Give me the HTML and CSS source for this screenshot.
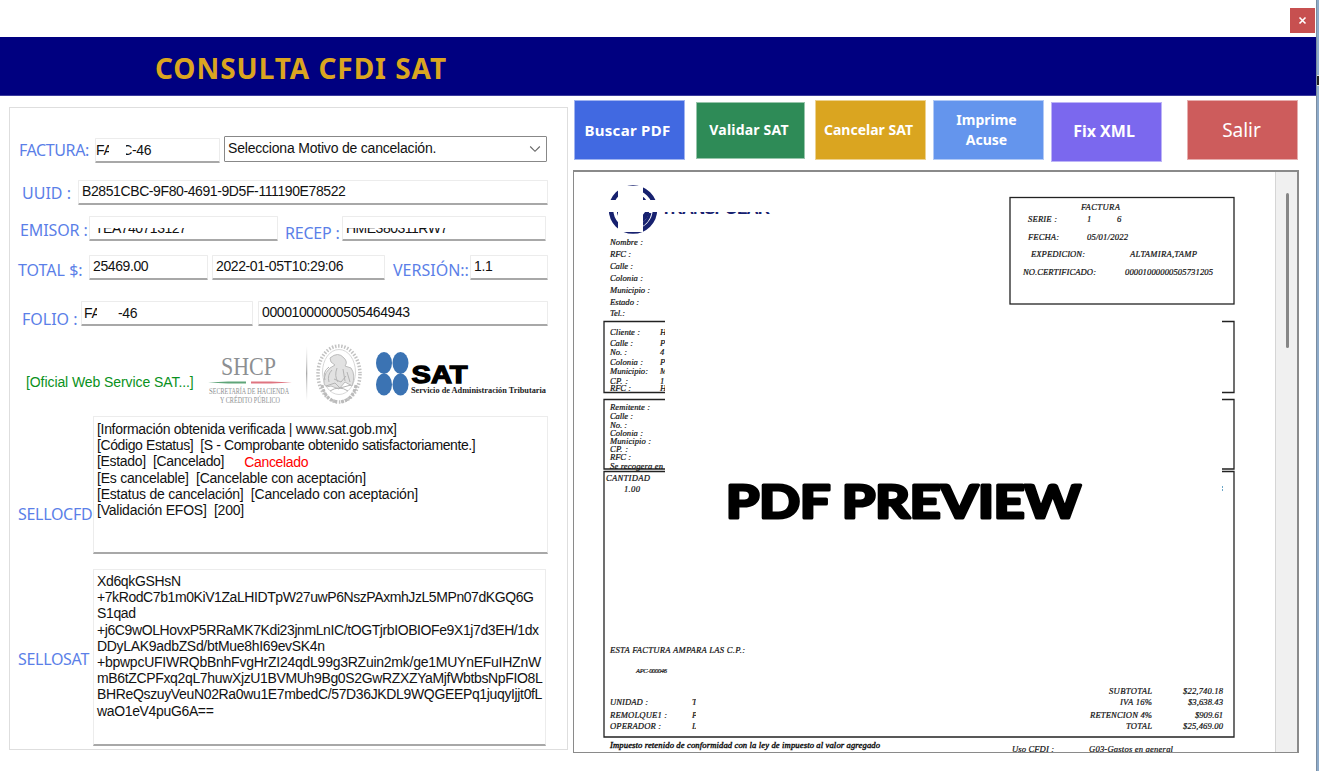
FILE: index.html
```html
<!DOCTYPE html>
<html lang="es">
<head>
<meta charset="utf-8">
<title>Consulta CFDI SAT</title>
<link rel="stylesheet" href="styles.css">
</head>
<body>
<main class="window">
  <div class="titlebar">
    <button class="close" aria-label="Cerrar"><svg width="9" height="9" viewBox="0 0 9 9"><path d="M1.5 1.5l6 6M7.5 1.5l-6 6" stroke="#fff" stroke-width="1.6"/></svg></button>
  </div>
  <header class="header"><h1>CONSULTA CFDI SAT</h1></header>
  <div class="content">
    <section class="panel">
      <div class="row row-factura">
        <label class="label l-factura">FACTURA:</label>
        <div class="field f-factura"><span class="half w13">FA</span><span class="half tail w8">C</span><span>-46</span></div>
        <div class="select"><span>Selecciona Motivo de cancelación.</span>
          <svg width="12" height="8" viewBox="0 0 12 8"><path d="M1.2 1.5L6 6.3l4.8-4.8" fill="none" stroke="#666" stroke-width="1.1"/></svg></div>
      </div>
      <div class="row row-uuid">
        <label class="label l-uuid">UUID :</label>
        <div class="field f-uuid">B2851CBC-9F80-4691-9D5F-111190E78522</div>
      </div>
      <div class="row row-emisor">
        <label class="label l-emisor">EMISOR :</label>
        <div class="field f-emisor"><span class="cut">TEA740713127</span></div>
        <label class="label l-recep">RECEP :</label>
        <div class="field f-recep"><span class="cut">HME380311RW7</span></div>
      </div>
      <div class="row row-total">
        <label class="label l-total">TOTAL $:</label>
        <div class="field f-total">25469.00</div>
        <div class="field f-fecha">2022-01-05T10:29:06</div>
        <label class="label l-version">VERSIÓN::</label>
        <div class="field f-version">1.1</div>
      </div>
      <div class="row row-folio">
        <label class="label l-folio">FOLIO :</label>
        <div class="field f-folio"><span class="half w13">FA</span><span class="folio-end">-46</span></div>
        <div class="field f-cert">00001000000505464943</div>
      </div>
      <div class="row row-logos">
        <span class="service">[Oficial Web Service SAT...]</span>
        <svg class="logos" width="345" height="68" viewBox="204 340 345 68">
          <defs><linearGradient id="rule" x1="0" y1="0" x2="0" y2="1"><stop offset="0" stop-color="#ccc" stop-opacity="0"/><stop offset=".5" stop-color="#aaa"/><stop offset="1" stop-color="#ccc" stop-opacity="0"/></linearGradient></defs>
          <g font-family="Liberation Serif, serif" fill="#8d8f92">
            <text x="221" y="375" font-size="26" textLength="55" lengthAdjust="spacingAndGlyphs">SHCP</text>
            <text x="209" y="393.500" font-size="8.500" textLength="80" lengthAdjust="spacingAndGlyphs">S<tspan font-size="7.500">ECRETARÍA DE </tspan>H<tspan font-size="7.500">ACIENDA</tspan></text>
            <text x="220" y="402.500" font-size="7.500" textLength="60" lengthAdjust="spacingAndGlyphs">Y CRÉDITO PÚBLICO</text>
          </g>
          <path d="M208 382.500l20-1h18v2h-18z" fill="#5fa579"/><path d="M251 381.500h20l21 1-21 1h-20z" fill="#df7480"/>
          <rect x="306" y="346" width="1.300" height="55" fill="url(#rule)"/>
          <g fill="none" stroke="#c2c2c2">
            <ellipse cx="339" cy="374" rx="21" ry="28" stroke-width="3.500" stroke-dasharray="1.500 1.600"/>
            <ellipse cx="339" cy="372" rx="16.500" ry="22.500" stroke="#d8d8d8" stroke-width="1"/>
            <path d="M322 385q3 15 16 17M356 385q-3 15-16 17" stroke-width="3" stroke-dasharray="3 1.200" stroke="#bbb"/>
            <path d="M330 358q8-7 14 0q4 4 1 8l6 2q5 7 1 18l-7-4-6 7-8-3q-8 3-7-7q1-7 6-11l5-3-4-3z" fill="#e2e2e2" stroke="#bcbcbc"/>
            <path d="M329 367q-7 5-4 13M332 370q-5 5-3 12M337 368q-3 8 1 14M343 369l2 12M347 372l3 10M326 386l9-3 5 5 11-3M330 391q9-6 18 0M334 379l7 3 5-6" stroke="#b4b4b4" stroke-width="1"/>
          </g>
          <g fill="#3b73b3"><ellipse cx="384" cy="363" rx="8" ry="11"/><ellipse cx="400.500" cy="363" rx="8" ry="11"/><ellipse cx="384" cy="384.500" rx="8" ry="11"/><ellipse cx="400.500" cy="384.500" rx="8" ry="11"/></g>
          <text x="411.500" y="382.500" font-family="Liberation Sans, sans-serif" font-weight="700" font-size="24.500" textLength="56" lengthAdjust="spacingAndGlyphs" stroke="#000" stroke-width="1.300">SAT</text>
          <text x="411" y="392.500" font-family="Liberation Serif, serif" font-weight="700" font-size="9" fill="#222" textLength="135" lengthAdjust="spacingAndGlyphs">Servicio de Administración Tributaria</text>
        </svg>
      </div>
      <div class="row row-cfd">
        <label class="label l-cfd">SELLOCFD</label>
        <div class="area a-cfd">
          <div class="line1">[Información obtenida verificada | www.sat.gob.mx]</div>
          <div class="line2">[Código Estatus]&nbsp; [S - Comprobante obtenido satisfactoriamente.]</div>
          <div class="line1">[Estado]&nbsp; [Cancelado]<span class="red">Cancelado</span></div>
          <div>[Es cancelable]&nbsp; [Cancelable con aceptación]</div>
          <div>[Estatus de cancelación]&nbsp; [Cancelado con aceptación]</div>
          <div>[Validación EFOS]&nbsp; [200]</div>
        </div>
      </div>
      <div class="row row-sat">
        <label class="label l-sat">SELLOSAT</label>
        <div class="area a-sat">
          <div>Xd6qkGSHsN</div>
          <div class="s2">+7kRodC7b1m0KiV1ZaLHIDTpW27uwP6NszPAxmhJzL5MPn07dKGQ6G</div>
          <div>S1qad</div>
          <div class="s4">+j6C9wOLHovxP5RRaMK7Kdi23jnmLnIC/tOGTjrbIOBIOFe9X1j7d3EH/1dx</div>
          <div class="s5">DDyLAK9adbZSd/btMue8hI69evSK4n</div>
          <div class="s6">+bpwpcUFIWRQbBnhFvgHrZI24qdL99g3RZuin2mk/ge1MUYnEFuIHZnW</div>
          <div class="s7">mB6tZCPFxq2qL7huwXjzU1BVMUh9Bg0S2GwRZXZYaMjfWbtbsNpFIO8L</div>
          <div class="s7">BHReQszuyVeuN02Ra0wu1E7mbedC/57D36JKDL9WQGEEPq1juqyIjjt0fL</div>
          <div class="s7">waO1eV4puG6A==</div>
        </div>
      </div>
    </section>
    <section class="right">
      <nav class="buttons">
        <button class="btn b-buscar">Buscar PDF</button>
        <button class="btn b-validar">Validar SAT</button>
        <button class="btn b-cancelar">Cancelar SAT</button>
        <button class="btn b-imprime">Imprime<br>Acuse</button>
        <button class="btn b-fix">Fix XML</button>
        <button class="btn b-salir">Salir</button>
      </nav>
      <div class="viewer">
        <svg class="doc" width="700" height="580" viewBox="575 172 700 580">
          <defs><clipPath id="name"><rect x="658" y="212" width="120" height="2"/></clipPath>
            <clipPath id="data"><rect x="600" y="320" width="65" height="150"/></clipPath>
            <clipPath id="unit"><rect x="690" y="690" width="6" height="45"/></clipPath></defs>
          <g fill="none" stroke="#17216f"><circle cx="633" cy="209.500" r="22" stroke-width="4.500"/><circle cx="633" cy="209.500" r="15" stroke-width="2.500"/><path d="M640 226q8-4 10-13M641 220l6-8" stroke-width="3"/></g>
          <rect x="618" y="186" width="25" height="46" fill="#fff"/><rect x="608" y="200" width="52" height="12" fill="#fff"/>
          <text x="661" y="213.500" clip-path="url(#name)" class="brand" textLength="109">TRANSPOLAR</text>
          <g fill="none" stroke="#222" stroke-width="1.300">
            <rect x="1010" y="197.500" width="224" height="106.500"/>
            <path d="M665 321.500H604V392.500H665M1222 321.500H1234V392.500H1222M665 399.500H604V469H665M1222 399.500H1234V469H1222M665 471.500H604V737H1234V471.500H1222"/>
          </g>
          <g class="t">
            <text x="610" y="244.500" textLength="33">Nombre :</text><text x="610" y="257" textLength="21">RFC :</text><text x="610" y="268.500" textLength="23">Calle :</text><text x="610" y="281" textLength="33">Colonia :</text><text x="610" y="292.500" textLength="40">Municipio :</text><text x="610" y="304.500" textLength="29">Estado :</text><text x="610" y="316" textLength="15">Tel.:</text>
            <text x="610" y="335" textLength="30">Cliente :</text><text x="610" y="346" textLength="23">Calle :</text><text x="610" y="355" textLength="17">No. :</text><text x="610" y="365" textLength="33">Colonia :</text><text x="610" y="373.500" textLength="38">Municipio:</text><text x="610" y="383.500" textLength="18">CP. :</text><text x="610" y="391" textLength="21">RFC :</text>
            <g clip-path="url(#data)"><text x="660" y="335">H</text><text x="660" y="346">P</text><text x="660" y="355">4</text><text x="660" y="365">P</text><text x="660" y="373.500">M</text><text x="660" y="383.500">1</text><text x="660" y="391">H</text></g>
            <text x="610" y="410" textLength="40">Remitente :</text><text x="610" y="419" textLength="23">Calle :</text><text x="610" y="427.500" textLength="17">No. :</text><text x="610" y="435.500" textLength="33">Colonia :</text><text x="610" y="444" textLength="41">Municipio :</text><text x="610" y="451.500" textLength="18">CP. :</text><text x="610" y="460" textLength="21">RFC :</text><text x="610" y="469" textLength="53">Se recogera en</text>
            <text x="606" y="481" textLength="44">CANTIDAD</text><text x="624" y="492" textLength="16">1.00</text>
            <text x="610" y="652.500" textLength="135">ESTA FACTURA AMPARA LAS C.P.:</text><text x="636" y="672.500" class="tiny" textLength="31">APC-000046</text>
            <text x="610" y="705" textLength="38">UNIDAD :</text><text x="610" y="717.500" textLength="57">REMOLQUE1 :</text><text x="610" y="728.500" textLength="51">OPERADOR :</text>
            <g clip-path="url(#unit)"><text x="692" y="705">T</text><text x="692" y="717.500">P</text><text x="692" y="728.500">L</text></g>
            <text x="610" y="747.500" class="heavy" textLength="270">Impuesto retenido de conformidad con la ley de impuesto al valor agregado</text>
            <text x="1012" y="752" textLength="42">Uso CFDI :</text><text x="1089" y="752" textLength="84">G03-Gastos en general</text>
            <text x="1081" y="209.500" textLength="39">FACTURA</text><text x="1028" y="222" textLength="29">SERIE :</text><text x="1087" y="222">1</text><text x="1117" y="222">6</text>
            <text x="1028" y="239.500" textLength="31">FECHA:</text><text x="1087" y="239.500" textLength="41">05/01/2022</text><text x="1031" y="257" textLength="54">EXPEDICION:</text><text x="1130" y="257" textLength="67">ALTAMIRA,TAMP</text><text x="1023" y="274.500" textLength="73">NO.CERTIFICADO:</text><text x="1125" y="274.500" textLength="88">00001000000505731205</text>
            <text x="1109" y="693.500" textLength="43">SUBTOTAL</text><text x="1120" y="705" textLength="32">IVA 16%</text><text x="1090" y="717.500" textLength="62">RETENCION 4%</text><text x="1126" y="728.500" textLength="26">TOTAL</text>
            <text x="1183" y="693.500" textLength="40">$22,740.18</text><text x="1188" y="705" textLength="35">$3,638.43</text><text x="1195" y="717.500" textLength="28">$909.61</text><text x="1183" y="728.500" textLength="40">$25,469.00</text>
          </g>
          <path d="M1222.500 486v6" stroke="#6ca7c8" stroke-dasharray="2 1"/>
          <text x="726" y="517.500" class="preview" textLength="355" lengthAdjust="spacingAndGlyphs">PDF PREVIEW</text>
        </svg>
        <div class="scroll"><div class="thumb"></div></div>
      </div>
    </section>
  </div>
</main>
<aside class="desktop"><i></i></aside>
</body>
</html>
```
FILE: styles.css
```css
* { box-sizing: border-box; }
body { margin: 0; width: 1319px; height: 771px; overflow: hidden; display: flex; background: #fff; font-family: "Liberation Sans", Arial, sans-serif; }
.window { width: 1316px; height: 771px; display: flex; flex-direction: column; }
.titlebar { height: 37px; padding: 8px 1px 0 0; display: flex; justify-content: flex-end; }
.close { width: 25px; height: 25px; border: 0; padding: 0; background: #c75050; display: flex; align-items: center; justify-content: center; }
.header { height: 59px; background: #000080; border-bottom: 1px solid #3b3b9d; padding-left: 155px; }
h1 { margin: 0; font: 700 28px/38px "Noto Sans", sans-serif; padding-top: 12px; color: #daa520; letter-spacing: .95px; white-space: nowrap; }
.content { display: flex; flex: 1; padding-left: 9px; }
.panel { width: 559px; height: 643px; margin-top: 11px; border: 1px solid #dedede; padding: 1px; }
.row { display: flex; align-items: flex-start; white-space: nowrap; }
.label { font: 16px/20px "Noto Sans", sans-serif; color: #5b7fe8; flex: none; }
.field { flex: none; height: 25px; padding: 2px 0 0 3px; border: 1px solid #ececec; border-bottom: 2px solid #a8a8a8; font-size: 14px; line-height: 16px; letter-spacing: -.4px; color: #111; overflow: hidden; display: flex; border-radius: 1px; }
.row-factura { height: 71px; padding: 27px 0 0 8px; }
.l-factura { width: 76px; padding-top: 4px; letter-spacing: -.4px; }
.f-factura { width: 125px; margin: 2px 4px 0 0; height: 25px; padding: 3px 0 0; }
.half { overflow: hidden; flex: none; }
.w13 { width: 13px; }
.w8 { width: 6px; margin-left: 17px; direction: rtl; }
.select { width: 323px; height: 26px; border: 1px solid #888; border-radius: 1px; font-size: 14px; line-height: 16px; letter-spacing: -.2px; padding: 0 5px 0 3px; display: flex; align-items: center; justify-content: space-between; color: #111; }
.select span { padding-bottom: 2px; }
.row-uuid { height: 36px; padding: 0 0 0 11px; }
.l-uuid { width: 56px; padding-top: 3px; }
.f-uuid { width: 470px; }
.row-emisor { height: 38px; padding-left: 9px; }
.l-emisor { width: 69px; padding-top: 4px; letter-spacing: -.1px; }
.f-emisor { width: 189px; margin-right: 7px; padding: 3px 0 0 5px; }
.l-recep { width: 57px; padding-top: 7px; letter-spacing: -.2px; }
.f-recep { width: 204px; padding-top: 3px; }
.cut { clip-path: inset(8px 0 0 0); letter-spacing: -.5px; }
.row-total { height: 47px; padding: 1px 0 0 7px; }
.l-total { width: 71px; padding-top: 5px; }
.f-total { width: 119px; margin-right: 4px; }
.f-fecha { width: 173px; margin-right: 8px; }
.l-version { width: 77px; padding-top: 5px; }
.f-version { width: 78px; }
.row-folio { height: 38px; padding-left: 11px; }
.l-folio { width: 59px; padding-top: 8px; }
.f-folio { width: 172px; margin-right: 5px; padding: 3px 0 0 2px; }
.folio-end { margin-left: 21px; }
.f-cert { width: 290px; }
.row-logos { height: 77px; padding-left: 15px; }
.service { width: 178px; padding-top: 35px; font-size: 14px; line-height: 16px; color: #0a9120; letter-spacing: -.08px; }
.logos { margin-top: 1px; flex: none; }
.row-cfd { height: 153px; padding-left: 7px; }
.l-cfd { width: 75px; padding-top: 88px; letter-spacing: -.3px; }
.area { border: 1px solid #ececec; border-bottom: 2px solid #a8a8a8; font-size: 14px; line-height: 16.2px; padding: 3px 0 0 3px; color: #111; letter-spacing: -.22px; flex: none; }
.a-cfd { width: 455px; height: 138px; padding-top: 4px; }
.line1 { letter-spacing: -.32px; }
.line2 { letter-spacing: -.4px; }
.red { color: #f00; margin-left: 20px; position: relative; top: 1px; }
.l-sat { width: 75px; padding-top: 80px; letter-spacing: -.3px; }
.row-sat { padding-left: 7px; }
.a-sat { width: 453px; height: 177px; letter-spacing: -.35px; }
.s2 { letter-spacing: -.42px; }
.s4 { letter-spacing: -.4px; }
.s5 { letter-spacing: -.32px; }
.s6 { letter-spacing: -.25px; }
.right { width: 726px; margin-left: 5px; padding-top: 4px; }
.buttons { display: flex; height: 70px; padding-left: 1px; align-items: flex-start; }
.btn { flex: none; width: 111px; height: 60px; border: 1px solid rgba(255,255,255,.5); color: #fff; font: 700 14px/20px "Noto Sans", sans-serif; padding: 0; white-space: nowrap; }
.b-buscar { background: #4169e1; margin-right: 11px; font-size: 15px; padding-right: 4px; letter-spacing: .3px; }
.b-validar { background: #2e8b57; width: 109px; height: 57px; margin: 2px 10px 0 0; padding: 0 3px 2px 0; letter-spacing: .2px; }
.b-cancelar { background: #daa520; margin-right: 7px; padding-right: 4px; }
.b-imprime { background: #6495ed; margin-right: 7px; padding-right: 4px; }
.b-fix { background: #7b68ee; margin: 2px 25px 0 0; font-size: 16px; padding: 0 5px 2px 0; }
.b-salir { background: #cd5c5c; font-weight: 400; font-size: 19px; padding-right: 2px; }
.viewer { width: 726px; height: 583px; border: 2px solid #8a8a8a; border-width: 2px 2px 1px 1px; display: flex; overflow: hidden; }
.doc { flex: none; margin-left: 1px; }
.scroll { width: 23px; background: #f0f0f0; border-left: 1px solid #d5d5d5; padding: 21px 0 0 10px; }
.thumb { width: 3px; height: 155px; border-radius: 2px; background: #868686; }
.t { font: italic 8.6px "Liberation Serif", serif; fill: #111; stroke: #111; stroke-width: .2px; }
.tiny { font-size: 6.5px; }
.heavy { stroke-width: .4px; }
.brand { font: 700 17px "Liberation Sans", sans-serif; fill: #17216f; }
.preview { font: 700 46px Lato, sans-serif; stroke: #000; stroke-width: 3.2px; stroke-linejoin: round; }
.desktop { width: 3px; height: 771px; background: #8eabc9; border-left: 1px solid #7b8da1; padding-top: 75px; }
.desktop i { display: block; width: 2px; height: 11px; background: #222; border: solid #ddd; border-width: 1px 0; }
```
